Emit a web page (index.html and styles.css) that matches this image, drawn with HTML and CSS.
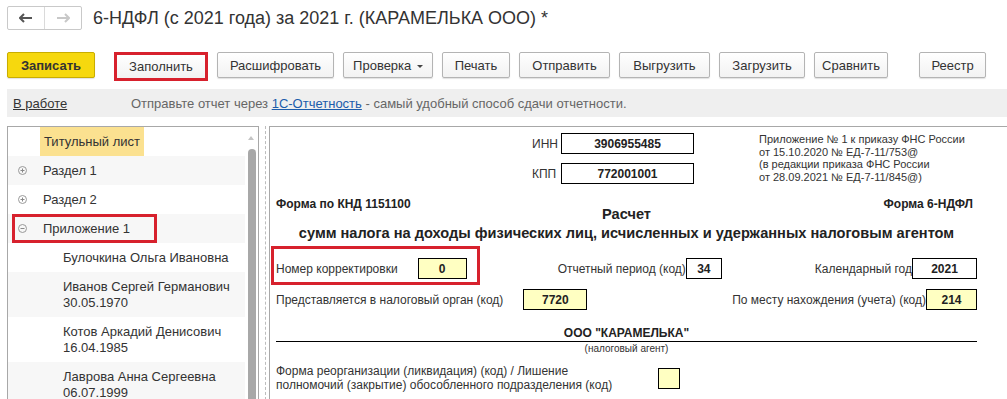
FILE: index.html
```html
<!DOCTYPE html>
<html lang="ru">
<head>
    <meta charset="UTF-8">
    <title>6-НДФЛ (с 2021 года) за 2021 г.</title>
    <link rel="stylesheet" href="styles.css">
</head>
<body>
    <div class="titlebar">
        <div class="nav">
            <span class="nav-btn">
                <svg width="14" height="10" viewBox="0 0 14 10"><path d="M5 1 L1 5 L5 9 M1 5 H13" fill="none" stroke="#555" stroke-width="2"/></svg>
            </span>
            <span class="nav-btn">
                <svg width="14" height="10" viewBox="0 0 14 10"><path d="M9 1 L13 5 L9 9 M13 5 H1" fill="none" stroke="#c8c8c8" stroke-width="2"/></svg>
            </span>
        </div>
        <h1>6-НДФЛ (с 2021 года) за 2021 г. (КАРАМЕЛЬКА ООО) *</h1>
    </div>

    <div class="toolbar">
        <button class="btn btn-main">Записать</button>
        <button class="btn btn-marked">Заполнить</button>
        <button class="btn btn-decode">Расшифровать</button>
        <button class="btn btn-check">Проверка <span class="caret"></span></button>
        <button class="btn btn-print">Печать</button>
        <button class="btn btn-md">Отправить</button>
        <button class="btn btn-md">Выгрузить</button>
        <button class="btn btn-load">Загрузить</button>
        <button class="btn btn-cmp">Сравнить</button>
        <button class="btn btn-last">Реестр</button>
    </div>

    <div class="infobar">
        <a class="status">В работе</a>
        <span class="hint">Отправьте отчет через <a class="link">1С-Отчетность</a> - самый удобный способ сдачи отчетности.</span>
    </div>

    <div class="main">
        <div class="tree">
            <ul class="tree-list">
                <li class="row"><span class="icon"></span><span class="current">Титульный лист</span></li>
                <li class="row odd"><span class="icon"><svg width="9" height="9" viewBox="0 0 9 9"><circle cx="4.5" cy="4.5" r="4" fill="none" stroke="#999"/><path d="M2.5 4.5 H6.5 M4.5 2.5 V6.5" stroke="#888"/></svg></span>Раздел 1</li>
                <li class="row"><span class="icon"><svg width="9" height="9" viewBox="0 0 9 9"><circle cx="4.5" cy="4.5" r="4" fill="none" stroke="#999"/><path d="M2.5 4.5 H6.5 M4.5 2.5 V6.5" stroke="#888"/></svg></span>Раздел 2</li>
                <li class="row odd"><span class="marked"><span class="icon"><svg width="9" height="9" viewBox="0 0 9 9"><circle cx="4.5" cy="4.5" r="4" fill="none" stroke="#999"/><path d="M2.5 4.5 H6.5" stroke="#888"/></svg></span>Приложение 1</span></li>
                <li class="row child">Булочкина Ольга Ивановна</li>
                <li class="row child odd">Иванов Сергей Германович<br>30.05.1970</li>
                <li class="row child">Котов Аркадий Денисович<br>16.04.1985</li>
                <li class="row child odd">Лаврова Анна Сергеевна<br>06.07.1999</li>
            </ul>
            <div class="scroll">
                <span class="scroll-up"></span>
                <span class="scroll-thumb"></span>
            </div>
        </div>
        <div class="splitter"></div>
        <div class="form">
            <div class="form-head">
                <div class="ids">
                    <div class="id-row"><span class="id-label">ИНН</span><span class="cell cell-wide">3906955485</span></div>
                    <div class="id-row"><span class="id-label">КПП</span><span class="cell cell-wide">772001001</span></div>
                </div>
                <div class="note">
                    Приложение № 1 к приказу ФНС России<br>
                    от 15.10.2020 № ЕД-7-11/753@<br>
                    (в редакции приказа ФНС России<br>
                    от 28.09.2021 № ЕД-7-11/845@)
                </div>
            </div>
            <div class="form-codes">
                <span>Форма по КНД 1151100</span>
                <span>Форма 6-НДФЛ</span>
            </div>
            <div class="form-title">
                Расчет<br>
                сумм налога на доходы физических лиц, исчисленных и удержанных налоговым агентом
            </div>
            <div class="line line-corr">
                <div class="mark">
                    <span class="label">Номер корректировки</span>
                    <span class="cell cell-input cell-corr">0</span>
                </div>
                <div class="group group-period">
                    <span class="label">Отчетный период (код)</span>
                    <span class="cell cell-period">34</span>
                </div>
                <div class="group group-year">
                    <span class="label">Календарный год</span>
                    <span class="cell cell-year">2021</span>
                </div>
            </div>
            <div class="line line-ifns">
                <span class="label">Представляется в налоговый орган (код)</span>
                <span class="cell cell-input cell-ifns">7720</span>
                <div class="group group-place">
                    <span class="label">По месту нахождения (учета) (код)</span>
                    <span class="cell cell-input cell-place">214</span>
                </div>
            </div>
            <div class="agent">ООО "КАРАМЕЛЬКА"</div>
            <div class="agent-sub">(налоговый агент)</div>
            <div class="line line-reorg">
                <span class="label">Форма реорганизации (ликвидация) (код) / Лишение<br>полномочий (закрытие) обособленного подразделения (код)</span>
                <span class="cell cell-input cell-reorg"></span>
            </div>
        </div>
    </div>
</body>
</html>
```

FILE: styles.css
```css
html, body {
    margin: 0;
    height: 399px;
    overflow: hidden;
}
body {
    font-family: "Liberation Sans", Arial, sans-serif;
    color: #333;
    background: #fff;
}

/* title */
.titlebar {
    display: flex;
    align-items: center;
    height: 24px;
    padding: 6px 7px 0;
}
.nav {
    display: flex;
    border: 1px solid #c9c9c9;
    border-radius: 2px;
    height: 22px;
}
.nav-btn {
    width: 36px;
    display: flex;
    align-items: center;
    justify-content: center;
}
.nav-btn + .nav-btn {
    border-left: 1px solid #dadada;
}
h1 {
    margin: 0 0 0 11px;
    font-size: 18px;
    font-weight: normal;
    color: #333;
}

/* toolbar */
.toolbar {
    display: flex;
    gap: 9px;
    margin-top: 22px;
    padding: 0 7px;
}
.btn {
    flex-shrink: 0;
    white-space: nowrap;
    height: 26px;
    padding: 0;
    font-family: inherit;
    font-size: 13px;
    color: #333;
    background: linear-gradient(#fff, #f2f2f2);
    border: 1px solid #b4b4b4;
    border-radius: 2px;
    box-shadow: 0 1px 1px rgba(0, 0, 0, 0.12);
}
.btn-main {
    width: 88px;
    font-weight: bold;
    background: #f6d80e;
    border-color: #c9ad00;
    margin-right: 10px;
}
.btn-marked {
    height: 29px;
    width: 94px;
    border: 3px solid #d7212d;
    box-shadow: none;
    border-radius: 0;
}
.btn-decode { width: 117px; }
.btn-check { width: 90px; }
.btn-print { width: 68px; }
.btn-md { width: 91px; }
.btn-load { width: 86px; }
.btn-cmp { width: 74px; }
.btn-last {
    width: 67px;
    margin-left: 22px;
}
.caret {
    display: inline-block;
    margin-left: 2px;
    vertical-align: middle;
    border-left: 3px solid transparent;
    border-right: 3px solid transparent;
    border-top: 3px solid #444;
}

/* info */
.infobar {
    display: flex;
    align-items: center;
    height: 28px;
    margin: 8px 0 0 7px;
    padding-left: 6px;
    background: #efefef;
    font-size: 13px;
}
.status {
    color: #333;
    text-decoration: underline;
    width: 118px;
}
.hint {
    color: #666;
}
.link {
    color: #1c5cab;
    text-decoration: underline;
}

/* main area */
.main {
    display: flex;
    margin-top: 9px;
    height: 274px;
}
.tree {
    display: flex;
    width: 250px;
    margin-left: 7px;
    border: 1px solid #a8a8a8;
    border-bottom: none;
}
.tree-list {
    list-style: none;
    margin: 0;
    padding: 0;
    width: 237px;
    font-size: 13px;
    color: #333;
}
.row {
    display: flex;
    align-items: center;
    min-height: 29px;
    padding-left: 10px;
    line-height: 16px;
}
.row.odd {
    background: #f7f7f7;
}
.row.child {
    display: block;
    padding: 7px 0 6px 55px;
    min-height: 0;
}
.icon {
    display: inline-flex;
    width: 25px;
}
.current {
    background: #fbe190;
    height: 29px;
    line-height: 29px;
    padding: 0 4px;
    margin-left: -3px;
}
.marked {
    display: flex;
    align-items: center;
    height: 23px;
    width: 136px;
    margin-left: -6px;
    padding-left: 3px;
    border: 3px solid #d7212d;
}
.scroll {
    position: relative;
    width: 13px;
}
.scroll-up {
    position: absolute;
    top: 9px;
    left: 3px;
    border-left: 3px solid transparent;
    border-right: 3px solid transparent;
    border-bottom: 4px solid #c4c4c4;
}
.scroll-thumb {
    position: absolute;
    top: 22px;
    left: 3px;
    width: 8px;
    height: 300px;
    background: #a8a8a8;
    border-radius: 4px;
}
.splitter {
    width: 6px;
    border-right: 1px dashed #bdbdbd;
    margin-right: 3px;
}

/* form */
.form {
    flex: 1;
    border-left: 1px solid #a8a8a8;
    border-top: 1px solid #a8a8a8;
    padding: 6px 0 0 6px;
    font-size: 12px;
    color: #333;
}
.form-head {
    display: flex;
}
.ids {
    display: flex;
    flex-direction: column;
    gap: 9px;
    margin-left: 256px;
}
.id-row {
    display: flex;
    align-items: center;
}
.id-label {
    width: 29px;
}
.cell {
    display: inline-flex;
    align-items: center;
    justify-content: center;
    height: 19px;
    border: 1px solid #000;
    font-weight: bold;
    color: #222;
}
.cell-wide {
    width: 131px;
}
.cell-input {
    background: #ffffc2;
}
.note {
    margin-left: 65px;
    font-size: 11px;
    line-height: 12.5px;
}
.form-codes {
    display: flex;
    justify-content: space-between;
    width: 697px;
    margin-top: 14px;
    font-size: 12px;
    font-weight: bold;
    line-height: 13px;
    color: #222;
}
.form-title {
    width: 701px;
    margin-top: -6px;
    text-align: center;
    font-size: 14.6px;
    font-weight: bold;
    line-height: 19px;
    color: #222;
}
.line {
    display: flex;
    align-items: center;
    width: 701px;
}
.line-corr {
    align-items: flex-start;
    margin-top: 3px;
}
.mark {
    display: flex;
    align-items: center;
    margin-left: -5px;
    padding: 9px 10px 3px 2px;
    border: 3px solid #d7212d;
}
.cell-corr {
    width: 47px;
    margin-left: 20px;
}
.group {
    display: flex;
    align-items: center;
}
.group-period {
    margin: 12px 0 0 78px;
}
.cell-period {
    width: 34px;
}
.group-year {
    margin: 12px 0 0 auto;
}
.cell-year {
    width: 63px;
}
.line-ifns {
    margin-top: 4px;
}
.cell-ifns {
    width: 62px;
    margin-left: 20px;
}
.group-place {
    margin-left: auto;
}
.cell-place {
    width: 49px;
}
.agent {
    width: 701px;
    margin-top: 17px;
    text-align: center;
    font-size: 12px;
    font-weight: bold;
    line-height: 13px;
    color: #222;
    border-bottom: 1px solid #000;
    padding-bottom: 1px;
}
.agent-sub {
    width: 701px;
    margin-top: 1px;
    text-align: center;
    font-size: 10px;
    line-height: 12px;
}
.line-reorg {
    margin-top: 9px;
    line-height: 14px;
}
.cell-reorg {
    width: 20px;
    margin-left: 46px;
}
```
